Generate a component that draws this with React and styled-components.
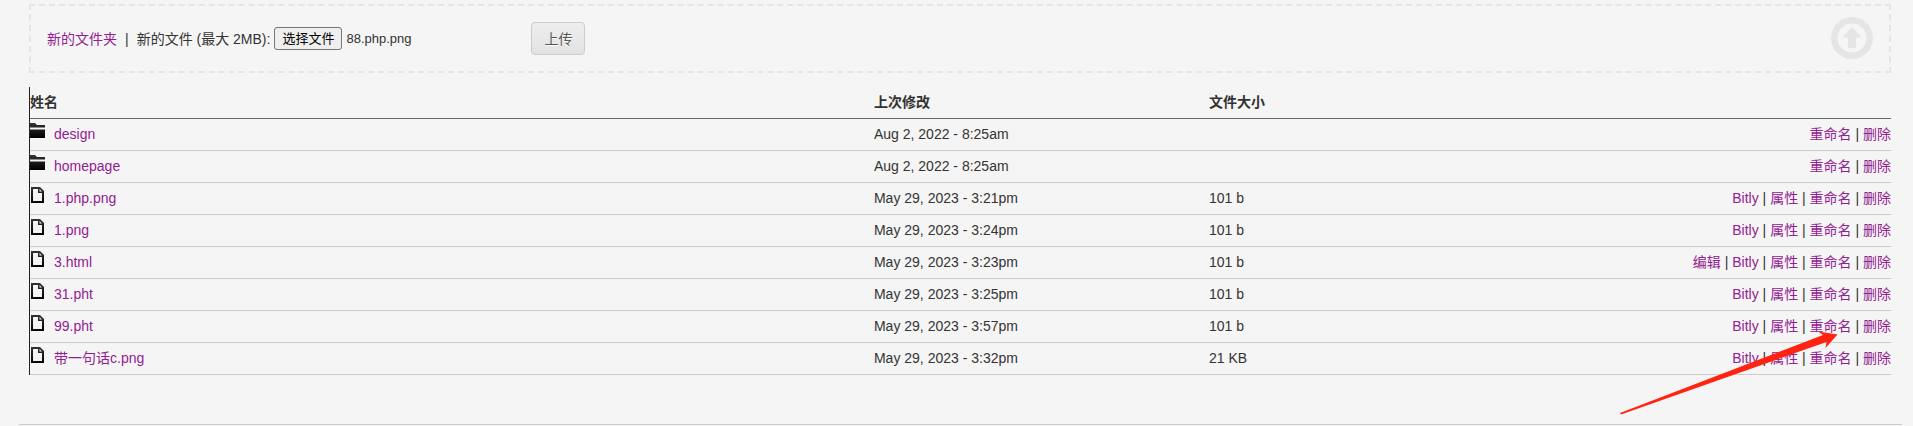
import React, { useRef, useState } from "react";
import styled, { createGlobalStyle } from "styled-components";

const GlobalStyle = createGlobalStyle`
  * {
    box-sizing: border-box;
  }
  body {
    margin: 0;
    background: #f5f5f5;
    color: #333;
    font-family: "Liberation Sans", "Noto Sans CJK SC", sans-serif;
    font-size: 14px;
    line-height: 22px;
  }
  button {
    font-family: inherit;
    cursor: pointer;
  }
`;

const Page = styled.main`
  padding: 4px 11px 0 19px;
`;

const Content = styled.section`
  position: relative;
  padding: 0 11px 49px 10px;
  border-bottom: 1px solid #ccc;
`;

const Link = styled.a`
  color: #932092;
  text-decoration: none;
  &:hover {
    text-decoration: underline;
  }
`;

const UploadForm = styled.form`
  display: flex;
  align-items: center;
  margin-bottom: 14px;
  padding: 11px 16px;
  border: 2px dashed #e5e5e5;
`;

const Divider = styled.span`
  margin: 0 8px;
`;

const FileField = styled.div`
  display: flex;
  align-items: center;
  width: 253px;
  margin: 0 4px;
  font-size: 13px;
`;

const ChooseButton = styled.button`
  height: 23px;
  margin-right: 4px;
  padding: 0 7px;
  border: 1px solid #767676;
  border-radius: 3px;
  background: #efefef;
  color: #000;
  font-size: 13px;
  line-height: 20px;
`;

const UploadButton = styled.button`
  height: 33px;
  padding: 0 12px;
  border: 1px solid #ccc;
  border-radius: 4px;
  background: linear-gradient(#eee, #e2e2e2);
  color: #555;
  font-size: 14px;
  line-height: 20px;
  text-shadow: 0 1px 0 #fff;
`;

const DropIcon = styled.svg`
  width: 42px;
  height: 42px;
  margin: 0 0 1px auto;
  fill: #e5e5e5;
`;

const FileTable = styled.table`
  width: 100%;
  table-layout: fixed;
  border-collapse: separate;
  border-spacing: 0;
  border-left: 1px solid #222;
  th,
  td {
    padding: 4px 0 5px;
    text-align: left;
  }
  th {
    border-bottom: 1px solid #666;
  }
  td {
    border-bottom: 1px solid #ccc;
  }
`;

const HeadCell = styled.th`
  width: ${({ $width }) => $width};
`;

const FileName = styled.div`
  display: flex;
  align-items: flex-start;
`;

const FileIcon = styled.svg`
  width: 16px;
  height: 16px;
  margin-right: 8px;
`;

const Actions = styled.div`
  text-align: right;
`;

const Arrow = styled.svg`
  position: absolute;
  right: 63px;
  bottom: 8px;
  width: 220px;
  height: 86px;
  fill: #ff2412;
  pointer-events: none;
`;

const files = [
  { name: "design", folder: true, modified: "Aug 2, 2022 - 8:25am" },
  { name: "homepage", folder: true, modified: "Aug 2, 2022 - 8:25am" },
  { name: "1.php.png", modified: "May 29, 2023 - 3:21pm", size: "101 b" },
  { name: "1.png", modified: "May 29, 2023 - 3:24pm", size: "101 b" },
  {
    name: "3.html",
    modified: "May 29, 2023 - 3:23pm",
    size: "101 b",
    editable: true,
  },
  { name: "31.pht", modified: "May 29, 2023 - 3:25pm", size: "101 b" },
  { name: "99.pht", modified: "May 29, 2023 - 3:57pm", size: "101 b" },
  { name: "带一句话c.png", modified: "May 29, 2023 - 3:32pm", size: "21 KB" },
];

const getActions = ({ folder, editable }) => {
  if (folder) return ["重命名", "删除"];
  const actions = ["Bitly", "属性", "重命名", "删除"];
  return editable ? ["编辑", ...actions] : actions;
};

const Icon = ({ folder }) => (
  <FileIcon viewBox="0 0 16 16" fill="url(#ink)" aria-hidden="true">
    {folder ? (
      <path d="M0 0h5l2 2h8v2.500H0zM0 6.500h15V15H0z" />
    ) : (
      <path
        fillRule="evenodd"
        d="M1 0h9l4 4v12H1zM3 2v12h9V6H8V2zM9.500 2v2.500H12z"
      />
    )}
  </FileIcon>
);

const UploadBar = () => {
  const [fileName, setFileName] = useState("88.php.png");
  const picker = useRef(null);

  const handleChange = (e) => {
    const file = e.target.files[0];
    if (file) setFileName(file.name);
  };

  return (
    <UploadForm onSubmit={(e) => e.preventDefault()}>
      <Link href="#new-folder">新的文件夹</Link>
      <Divider>|</Divider>
      <label htmlFor="choose">新的文件 (最大 2MB):</label>
      <FileField>
        <ChooseButton
          id="choose"
          type="button"
          onClick={() => picker.current.click()}
        >
          选择文件
        </ChooseButton>
        <input type="file" hidden ref={picker} onChange={handleChange} />
        <span>{fileName}</span>
      </FileField>
      <UploadButton type="submit">上传</UploadButton>
      <DropIcon viewBox="0 0 42 42" aria-hidden="true">
        <path
          fillRule="evenodd"
          d="M21 0a21 21 0 1 1 0 42a21 21 0 1 1 0-42zM21 6.500a14.500 14.500 0 1 0 0 29a14.500 14.500 0 1 0 0-29z"
        />
        <path d="M21 10l10 10.500h-6V31h-8V20.500h-6z" />
      </DropIcon>
    </UploadForm>
  );
};

const FileRow = ({ file }) => (
  <tr>
    <td>
      <FileName>
        <Icon folder={file.folder} />
        <Link href={`#${file.name}`}>{file.name}</Link>
      </FileName>
    </td>
    <td>{file.modified}</td>
    <td>{file.size}</td>
    <td>
      <Actions>
        {getActions(file).map((action, i) => (
          <React.Fragment key={action}>
            {i > 0 && " | "}
            <Link href={`#${file.name}`}>{action}</Link>
          </React.Fragment>
        ))}
      </Actions>
    </td>
  </tr>
);

const App = () => (
  <>
    <GlobalStyle />
    <svg width="0" height="0" style={{ display: "block" }} aria-hidden="true">
      <linearGradient id="ink" x1="0" y1="0" x2="0" y2="1">
        <stop offset="0" stopColor="#333" />
        <stop offset="1" stopColor="#000" />
      </linearGradient>
    </svg>
    <Page>
      <Content>
        <UploadBar />
        <FileTable>
          <thead>
            <tr>
              <HeadCell $width="45.35%">姓名</HeadCell>
              <HeadCell $width="18%">上次修改</HeadCell>
              <HeadCell $width="10%">文件大小</HeadCell>
              <HeadCell $width="auto" aria-label="操作" />
            </tr>
          </thead>
          <tbody>
            {files.map((file) => (
              <FileRow key={file.name} file={file} />
            ))}
          </tbody>
        </FileTable>
        <Arrow viewBox="0 0 220 86" aria-hidden="true">
          <path d="M1 83L204 5L199 1.500L218.500 4.500L206.500 18L207.500 12L2 84.500z" />
        </Arrow>
      </Content>
    </Page>
  </>
);

export default App;
